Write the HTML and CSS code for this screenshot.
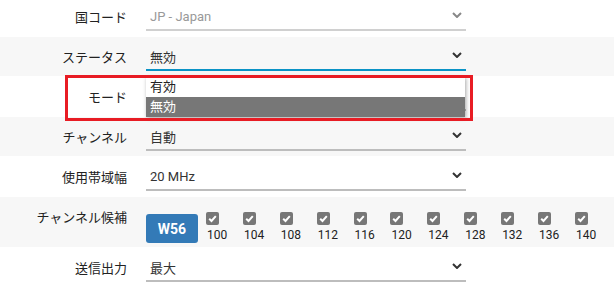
FILE: index.html
```html
<!DOCTYPE html>
<html lang="ja">
<head>
<meta charset="utf-8">
<link rel="stylesheet" href="styles.css">
</head>
<body>
<div class="form">
  <div class="row white">
    <div class="label">国コード</div>
    <div class="field">
      <div class="select disabled"><span>JP - Japan</span><svg class="chev" viewBox="0 0 10 6" width="10" height="6"><path d="M1 1L5 5L9 1"/></svg></div>
    </div>
  </div>
  <div class="row gray">
    <div class="label">ステータス</div>
    <div class="field">
      <div class="select focus"><span>無効</span><svg class="chev" viewBox="0 0 10 6" width="10" height="6"><path d="M1 1L5 5L9 1"/></svg></div>
      <ul class="dropdown">
        <li>有効</li>
        <li class="selected">無効</li>
      </ul>
    </div>
  </div>
  <div class="row white mark">
    <div class="label">モード</div>
    <div class="field">
      <div class="select"><span></span><svg class="chev" viewBox="0 0 10 6" width="10" height="6"><path d="M1 1L5 5L9 1"/></svg></div>
    </div>
    <div class="highlight"></div>
  </div>
  <div class="row gray">
    <div class="label">チャンネル</div>
    <div class="field">
      <div class="select"><span>自動</span><svg class="chev" viewBox="0 0 10 6" width="10" height="6"><path d="M1 1L5 5L9 1"/></svg></div>
    </div>
  </div>
  <div class="row white">
    <div class="label">使用帯域幅</div>
    <div class="field">
      <div class="select"><span>20 MHz</span><svg class="chev" viewBox="0 0 10 6" width="10" height="6"><path d="M1 1L5 5L9 1"/></svg></div>
    </div>
  </div>
  <div class="row gray channels-row">
    <div class="label">チャンネル候補</div>
    <div class="field channels">
      <button class="band">W56</button>
      <div class="ch"><span class="box"><svg viewBox="0 0 13 13" width="13" height="13"><path d="M3.2 6.8L5.5 9L9.8 4.2"/></svg></span><span class="num">100</span></div>
      <div class="ch"><span class="box"><svg viewBox="0 0 13 13" width="13" height="13"><path d="M3.2 6.8L5.5 9L9.8 4.2"/></svg></span><span class="num">104</span></div>
      <div class="ch"><span class="box"><svg viewBox="0 0 13 13" width="13" height="13"><path d="M3.2 6.8L5.5 9L9.8 4.2"/></svg></span><span class="num">108</span></div>
      <div class="ch"><span class="box"><svg viewBox="0 0 13 13" width="13" height="13"><path d="M3.2 6.8L5.5 9L9.8 4.2"/></svg></span><span class="num">112</span></div>
      <div class="ch"><span class="box"><svg viewBox="0 0 13 13" width="13" height="13"><path d="M3.2 6.8L5.5 9L9.8 4.2"/></svg></span><span class="num">116</span></div>
      <div class="ch"><span class="box"><svg viewBox="0 0 13 13" width="13" height="13"><path d="M3.2 6.8L5.5 9L9.8 4.2"/></svg></span><span class="num">120</span></div>
      <div class="ch"><span class="box"><svg viewBox="0 0 13 13" width="13" height="13"><path d="M3.2 6.8L5.5 9L9.8 4.2"/></svg></span><span class="num">124</span></div>
      <div class="ch"><span class="box"><svg viewBox="0 0 13 13" width="13" height="13"><path d="M3.2 6.8L5.5 9L9.8 4.2"/></svg></span><span class="num">128</span></div>
      <div class="ch"><span class="box"><svg viewBox="0 0 13 13" width="13" height="13"><path d="M3.2 6.8L5.5 9L9.8 4.2"/></svg></span><span class="num">132</span></div>
      <div class="ch"><span class="box"><svg viewBox="0 0 13 13" width="13" height="13"><path d="M3.2 6.8L5.5 9L9.8 4.2"/></svg></span><span class="num">136</span></div>
      <div class="ch"><span class="box"><svg viewBox="0 0 13 13" width="13" height="13"><path d="M3.2 6.8L5.5 9L9.8 4.2"/></svg></span><span class="num">140</span></div>
    </div>
  </div>
  <div class="row white">
    <div class="label">送信出力</div>
    <div class="field">
      <div class="select"><span>最大</span><svg class="chev" viewBox="0 0 10 6" width="10" height="6"><path d="M1 1L5 5L9 1"/></svg></div>
    </div>
  </div>
</div>
</body>
</html>
```

FILE: styles.css
```css
html, body {
  margin: 0;
  padding: 0;
  background: #fff;
}
body {
  font-family: Roboto, "Noto Sans CJK JP", sans-serif;
  font-size: 13px;
  color: #333;
  overflow: hidden;
}
.form {
  margin-top: -4px;
}
.row {
  display: grid;
  grid-template-columns: 127px 320px;
  column-gap: 19px;
  align-items: start;
}
.row.white {
  background: #fff;
  padding: 5px 0 6px;
}
.row.gray {
  background: #f7f7f7;
  padding: 4px 0 5px;
}
.row.mark {
  position: relative;
}
.label {
  text-align: right;
  height: 30px;
  line-height: 30px;
  padding-top: 2px;
  box-sizing: border-box;
  color: #222;
  white-space: nowrap;
}
.field {
  position: relative;
}
.select {
  height: 30px;
  box-sizing: border-box;
  border-bottom: 2px solid #bdbdbd;
  display: flex;
  align-items: center;
  justify-content: space-between;
  padding: 2px 4px 0;
  color: #333;
}
.select.disabled {
  color: #999;
  border-bottom-color: #d0d0d0;
}
.select.focus {
  border-bottom-color: #0a93c6;
}
.chev {
  fill: none;
  stroke: #333;
  stroke-width: 2;
  margin-top: -2px;
}
.select.disabled .chev {
  stroke: #888;
}
.dropdown {
  position: absolute;
  top: calc(100% + 6px);
  left: 0;
  width: 319px;
  margin: 0;
  padding: 0;
  list-style: none;
  background: #fff;
  box-shadow: 1px 1px 4px rgba(0, 0, 0, 0.35);
  z-index: 5;
}
.dropdown li {
  height: 20px;
  line-height: 20px;
  padding-left: 4px;
  color: #222;
}
.dropdown li.selected {
  background: #777;
  color: #fff;
}
.highlight {
  position: absolute;
  left: 65px;
  top: -1px;
  width: 408px;
  height: 46px;
  box-sizing: border-box;
  border: 3px solid #e81c24;
  z-index: 10;
}
.row.channels-row {
  padding: 15px 0 4px;
}
.channels-row .label {
  height: 20px;
  line-height: 20px;
  padding-top: 0;
  margin-top: -4px;
}
.channels {
  display: flex;
  align-items: flex-start;
}
.band {
  width: 52px;
  height: 29px;
  margin: 2px 8px 0 0;
  padding: 0;
  border: none;
  border-radius: 3px;
  background: #337ab7;
  color: #fff;
  font-family: Roboto, sans-serif;
  font-weight: bold;
  font-size: 14px;
  flex-shrink: 0;
}
.ch {
  width: 36.9px;
  flex-shrink: 0;
  display: flex;
  flex-direction: column;
  align-items: flex-start;
}
.box {
  width: 13px;
  height: 13px;
  border-radius: 2px;
  background: #777;
  display: block;
}
.box svg {
  display: block;
  fill: none;
  stroke: #fff;
  stroke-width: 2;
}
.num {
  margin-top: 3px;
  padding-left: 1px;
  font-size: 12px;
  line-height: 14px;
  color: #222;
}
```
